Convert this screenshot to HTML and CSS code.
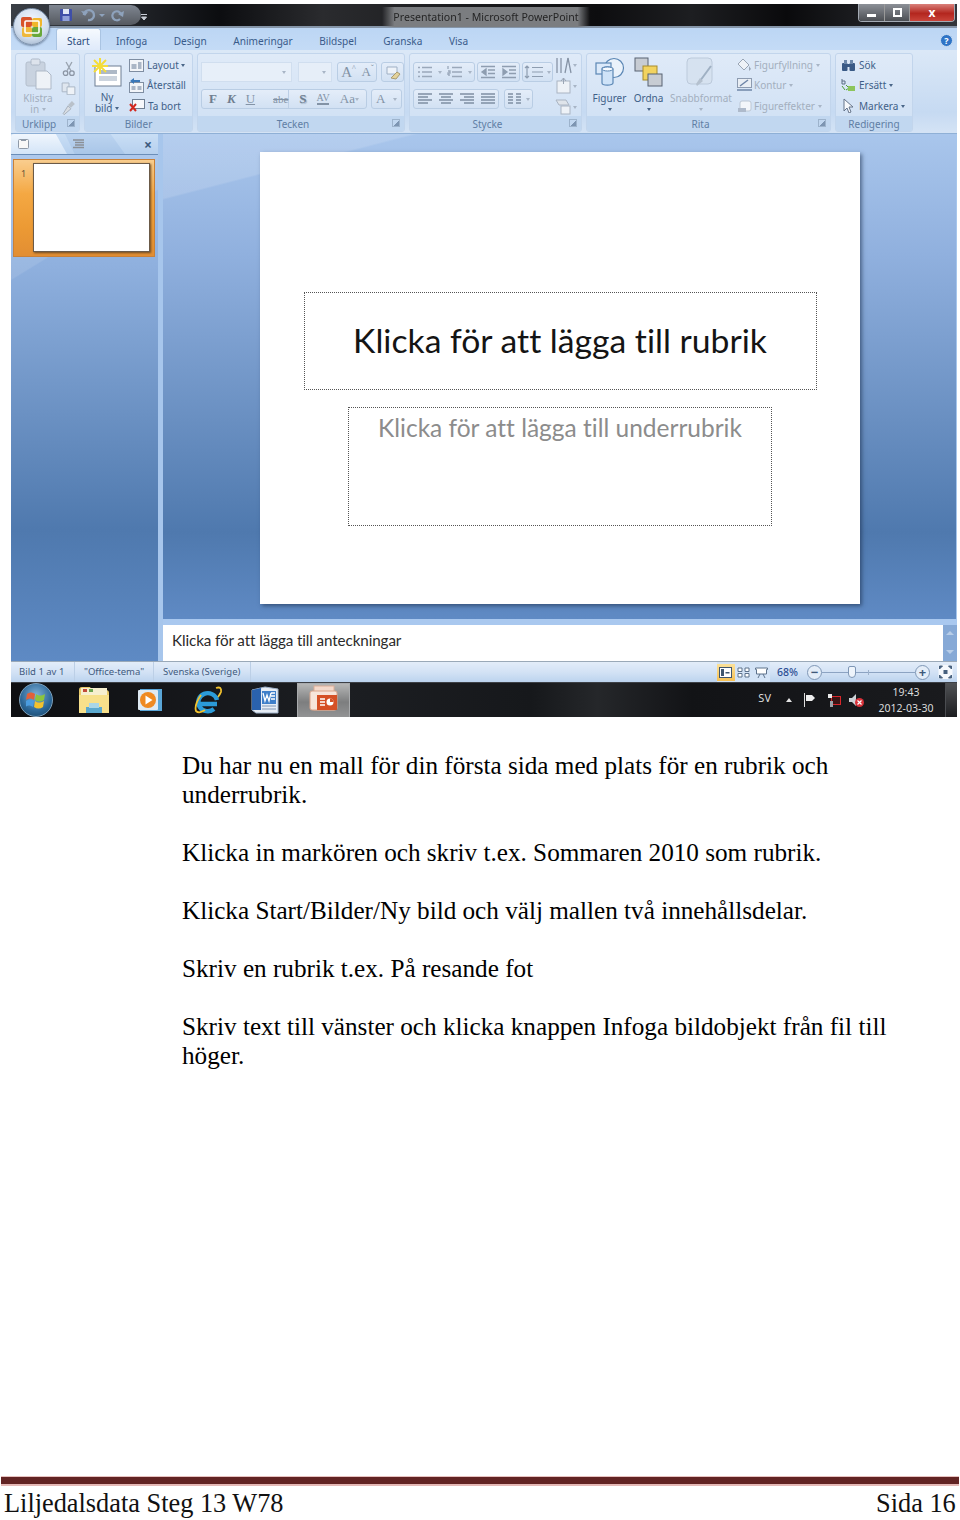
FILE: index.html
```html
<!DOCTYPE html>
<html lang="sv">
<head>
<meta charset="utf-8">
<title>Liljedalsdata Steg 13 W78</title>
<link rel="stylesheet" href="styles.css">
</head>
<body>
<div class="page">
  <div class="shot">
    <header class="titlebar">
      <div class="orb">
        <svg width="24" height="24" viewBox="0 0 24 24"><rect x="1" y="2" width="11" height="10" rx="2" fill="#d8532a"/><rect x="12" y="3" width="10" height="9" rx="2" fill="#f0b62c"/><rect x="2" y="12" width="10" height="10" rx="2" fill="#efb83a"/><rect x="12" y="12" width="10" height="10" rx="2" fill="#6aa83a"/><rect x="5" y="6" width="14" height="12" rx="1" fill="none" stroke="#fff" stroke-width="1.6"/></svg>
      </div>
      <div class="qat">
        <svg width="14" height="14" viewBox="0 0 14 14"><rect x="1" y="1" width="12" height="12" rx="1" fill="#3f4fa8"/><rect x="4" y="1" width="6" height="5" fill="#dfe6f5"/><rect x="3.500" y="8" width="7" height="5" fill="#8f9fd8"/></svg>
        <svg width="16" height="14" viewBox="0 0 16 14"><path d="M4 7 A5 5 0 1 1 8 12" fill="none" stroke="#8ea2bc" stroke-width="2.400"/><path d="M1 3 l4 5 l3-4z" fill="#8ea2bc"/></svg>
        <span class="qat-caret"></span>
        <svg width="14" height="14" viewBox="0 0 14 14"><path d="M10 6 A4.500 4.500 0 1 0 9 11" fill="none" stroke="#8ea2bc" stroke-width="2.200"/><path d="M13 3 l-1 6 l-5-3z" fill="#8ea2bc"/></svg>
      </div>
      <svg class="qat-more" width="8" height="8" viewBox="0 0 8 8"><path d="M1 1.500h6M1.500 4h5l-2.500 3z" fill="#c9ced6" stroke="#c9ced6"/></svg>
      <div class="doc-title">Presentation1 - Microsoft PowerPoint</div>
      <div class="winbtns">
        <div class="wb wb-min"><span class="wb-dash"></span></div>
        <div class="wb wb-max"><span class="wb-box"></span></div>
        <div class="wb wb-close">x</div>
      </div>
    </header>

    <nav class="tabs">
      <span class="tab active">Start</span>
      <span class="tab">Infoga</span>
      <span class="tab">Design</span>
      <span class="tab">Animeringar</span>
      <span class="tab">Bildspel</span>
      <span class="tab">Granska</span>
      <span class="tab">Visa</span>
      <span class="help">?</span>
    </nav>

    <section class="ribbon">
      <div class="group g-urklipp">
        <div class="gbody urklipp">
          <div class="bigbtn dis w-klistra">
            <svg width="28" height="32" viewBox="0 0 28 32"><rect x="2" y="4" width="19" height="24" rx="2" fill="#c9d3e0" stroke="#b4bfcd"/><rect x="7" y="1" width="9" height="6" rx="1.500" fill="#dde3ec" stroke="#aeb9c8"/><path d="M12 13h11l4 4v14H12z" fill="#eef2f7" stroke="#aeb9c8"/></svg>
            <span class="lbl l-first">Klistra</span><span class="lbl">in <i class="car"></i></span>
          </div>
          <div class="smallcol">
            <svg width="14" height="16" viewBox="0 0 14 16"><path d="M4 1l5 9M10 1L5 10" stroke="#9aa4b0" stroke-width="1.400"/><circle cx="3.500" cy="12.500" r="2.300" fill="none" stroke="#8b95a4" stroke-width="1.300"/><circle cx="10" cy="12.500" r="2.300" fill="none" stroke="#8b95a4" stroke-width="1.300"/></svg>
            <svg width="15" height="14" viewBox="0 0 15 14"><path d="M1 1h7v9H1z" fill="#dfe6ef" stroke="#aab6c5"/><path d="M6 5h8v8H6z" fill="#eef2f7" stroke="#aab6c5"/></svg>
            <svg width="14" height="16" viewBox="0 0 14 16"><path d="M10 1l3 3-4 4-3-3z" fill="#b9c1ca"/><path d="M6 6l3 3-7 6-1-1z" fill="#d8dde3" stroke="#a7b0bb"/></svg>
          </div>
        </div>
        <div class="gfoot"><span>Urklipp</span><i class="launch"></i></div>
      </div>

      <div class="group g-bilder">
        <div class="gbody bilder">
          <div class="bigbtn w-ny">
            <svg width="32" height="30" viewBox="0 0 32 30"><rect x="4" y="9" width="26" height="20" fill="#fff" stroke="#6f7f93"/><rect x="8" y="13" width="18" height="4" fill="#aeb9c7"/><rect x="8" y="19" width="18" height="5" fill="#ccd4de"/><path d="M9 1v16M1 9h16M3 3l12 12M15 3L3 15" stroke="#f4dd3a" stroke-width="2"/></svg>
            <span class="lbl dark l-ny">Ny</span><span class="lbl dark">bild <i class="car dk"></i></span>
          </div>
          <div class="rows">
            <div class="srow"><svg width="15" height="13" viewBox="0 0 15 13"><rect x=".5" y=".5" width="14" height="12" fill="#f2f5f9" stroke="#7f8ea2"/><rect x="2.500" y="5" width="5" height="5" fill="#aab6c6"/><rect x="9" y="3" width="3.500" height="7" fill="#aab6c6"/></svg><span>Layout <i class="car dk"></i></span></div>
            <div class="srow"><svg width="15" height="15" viewBox="0 0 15 15"><rect x=".5" y="4.500" width="14" height="10" fill="#f2f5f9" stroke="#7f8ea2"/><rect x="2.500" y="8" width="4" height="4" fill="#aab6c6"/><rect x="8.500" y="8" width="4" height="4" fill="#aab6c6"/><path d="M1 3l4-3v2h6v2H5v2z" fill="#3a78b8"/></svg><span>Återställ</span></div>
            <div class="srow"><svg width="16" height="13" viewBox="0 0 16 13"><rect x="3.500" y=".5" width="12" height="9" fill="#f6f8fb" stroke="#6f7f93"/><path d="M1 5l6 7M7 5l-6 7" stroke="#d3281f" stroke-width="2"/></svg><span>Ta bort</span></div>
          </div>
        </div>
        <div class="gfoot"><span>Bilder</span></div>
      </div>

      <div class="group g-tecken">
        <div class="gbody stack">
          <div class="crow c1">
            <div class="combo w-font"><i class="car"></i></div>
            <div class="combo w-size"><i class="car"></i></div>
            <div class="bset w-grow"><span class="ser big">A<sup>^</sup></span><span class="ser">A<sup>ˇ</sup></span></div>
            <div class="bset w-clear"><svg width="16" height="15" viewBox="0 0 16 15"><path d="M2 2h10v7H2z" fill="#eef3f9" stroke="#9fb0c5"/><path d="M6 13l6-6 3 2-4 5z" fill="#e3d29a" stroke="#a99b70"/></svg></div>
          </div>
          <div class="crow c2">
            <div class="bset w-fmt">
              <span class="ser b">F</span><span class="ser it">K</span><span class="ser un">U</span><span class="ser st">abe</span><span class="ser b sh">S</span><span class="ser av">AV<i class="arw"></i></span><span class="ser aa">Aa<i class="car"></i></span>
            </div>
            <div class="bset w-col"><span class="ser">A</span><i class="car"></i></div>
          </div>
        </div>
        <div class="gfoot has-launch"><span>Tecken</span><i class="launch"></i></div>
      </div>

      <div class="group g-stycke">
        <div class="gbody stycke">
          <div class="stack">
            <div class="crow c1 tight">
              <div class="bset w-list">
                <svg width="16" height="14" viewBox="0 0 16 14"><path d="M5 2.500h10M5 7h10M5 11.500h10M1 2.500h2M1 7h2M1 11.500h2" stroke="#9aa8ba" stroke-width="1.400"/></svg><i class="car"></i>
                <svg width="16" height="14" viewBox="0 0 16 14"><path d="M5 2.500h10M5 7h10M5 11.500h10M1 1v3M1 6h2v2H1v2M1 10h2" stroke="#9aa8ba" stroke-width="1.300" fill="none"/></svg><i class="car"></i>
              </div>
              <div class="bset w-indent">
                <svg width="16" height="14" viewBox="0 0 16 14"><path d="M1 1.500h14M8 5h7M8 8.500h7M1 12.500h14M6 4l-4 3 4 3z" stroke="#8e9db0" stroke-width="1.300" fill="#8e9db0"/></svg>
                <svg width="16" height="14" viewBox="0 0 16 14"><path d="M1 1.500h14M8 5h7M8 8.500h7M1 12.500h14M2 4l4 3-4 3z" stroke="#8e9db0" stroke-width="1.300" fill="#8e9db0"/></svg>
              </div>
              <div class="bset w-line">
                <svg width="20" height="14" viewBox="0 0 20 14"><path d="M3 1v12M1 3l2-2 2 2M1 11l2 2 2-2M8 2.500h11M8 7h11M8 11.500h11" stroke="#8e9db0" stroke-width="1.200" fill="none"/></svg><i class="car"></i>
              </div>
            </div>
            <div class="crow c2 tight">
              <div class="bset w-align">
                <svg width="16" height="14" viewBox="0 0 16 14"><path d="M1 2h14M1 5h10M1 8h14M1 11h10" stroke="#7f8ea2" stroke-width="1.600"/></svg>
                <svg width="16" height="14" viewBox="0 0 16 14"><path d="M1 2h14M3 5h10M1 8h14M3 11h10" stroke="#7f8ea2" stroke-width="1.600"/></svg>
                <svg width="16" height="14" viewBox="0 0 16 14"><path d="M1 2h14M5 5h10M1 8h14M5 11h10" stroke="#7f8ea2" stroke-width="1.600"/></svg>
                <svg width="16" height="14" viewBox="0 0 16 14"><path d="M1 2h14M1 5h14M1 8h14M1 11h14" stroke="#7f8ea2" stroke-width="1.600"/></svg>
              </div>
              <div class="bset w-cols">
                <svg width="15" height="14" viewBox="0 0 15 14"><path d="M1 2h5M1 5h5M1 8h5M1 11h5M9 2h5M9 5h5M9 8h5M9 11h5" stroke="#7f8ea2" stroke-width="1.600"/></svg><i class="car"></i>
              </div>
            </div>
          </div>
          <div class="smallcol stycke-col">
            <span class="ic-car"><svg width="17" height="17" viewBox="0 0 17 17"><path d="M2 1v15M6 1v15M13 1l-3 15M13 1l3 15" stroke="#8794a6" stroke-width="1.300" fill="none"/></svg><i class="car"></i></span>
            <span class="ic-car"><svg width="17" height="16" viewBox="0 0 17 16"><rect x="2" y="3" width="13" height="12" fill="#eef2f7" stroke="#aab4c2"/><path d="M8.500 0v6M6 3l2.500-3 2.500 3" stroke="#9aa5b4" fill="none"/></svg><i class="car"></i></span>
            <span class="ic-car"><svg width="17" height="16" viewBox="0 0 17 16"><path d="M1 1h10l3 5H4z" fill="#dfe4ea" stroke="#aab4c2"/><rect x="6" y="7" width="9" height="8" fill="#eef2f7" stroke="#aab4c2"/></svg><i class="car"></i></span>
          </div>
        </div>
        <div class="gfoot has-launch"><span>Stycke</span><i class="launch"></i></div>
      </div>

      <div class="group g-rita">
        <div class="gbody rita">
          <div class="bigbtn w-fig">
            <svg width="30" height="30" viewBox="0 0 30 30"><circle cx="19" cy="11" r="9.500" fill="#eaf2fb" stroke="#5a86b4" stroke-width="1.200"/><rect x="1" y="6" width="15" height="11" fill="#dceafa" stroke="#5a86b4" stroke-width="1.200"/><path d="M7 12a5 2 0 0 1 11 0v14a5 2 0 0 1-11 0z" fill="#cfe3f8" stroke="#5a86b4" stroke-width="1.200"/><ellipse cx="12.500" cy="12" rx="5.500" ry="2" fill="#f7fbff" stroke="#5a86b4"/></svg>
            <span class="lbl dark mt-fig">Figurer</span><i class="car dk solo"></i>
          </div>
          <div class="bigbtn w-ord">
            <svg width="30" height="30" viewBox="0 0 30 30"><rect x="1" y="1" width="13" height="13" fill="#c7ccd3" stroke="#596373"/><rect x="9" y="9" width="14" height="14" fill="#f2d35f" stroke="#a88b2d"/><rect x="14" y="17" width="14" height="12" fill="#c7ccd3" stroke="#596373"/></svg>
            <span class="lbl dark mt-fig">Ordna</span><i class="car dk solo"></i>
          </div>
          <div class="bigbtn dis w-snabb">
            <svg width="32" height="30" viewBox="0 0 32 30"><rect x="2" y="1" width="25" height="26" rx="4" fill="#d6e2f0" stroke="#bccadb"/><path d="M26 9L15 24" stroke="#9fb0c3" stroke-width="2"/><path d="M15 21l3 3-6 5-1-2z" fill="#b5c1cf"/></svg>
            <span class="lbl mt-fig">Snabbformat</span><i class="car solo"></i>
          </div>
          <div class="rows dis-rows">
            <div class="srow"><svg width="15" height="14" viewBox="0 0 15 14"><path d="M6 1l6 6-5 5-6-6z" fill="#eef2f7" stroke="#99a5b4"/><path d="M12 8l2 3-2 2z" fill="#99a5b4"/></svg><span>Figurfyllning <i class="car"></i></span></div>
            <div class="srow"><svg width="15" height="14" viewBox="0 0 15 14"><rect x=".5" y=".5" width="14" height="9" fill="#e9eef4" stroke="#8d9bb0"/><path d="M3 8l8-6M0 12h15" stroke="#6f86a8" stroke-width="1.500"/></svg><span>Kontur <i class="car"></i></span></div>
            <div class="srow"><svg width="15" height="14" viewBox="0 0 15 14"><rect x="3" y="2" width="11" height="10" rx="2" fill="#f3f6fa" stroke="#bcc7d4"/><rect x="1" y="9" width="8" height="4" fill="#aebacb"/></svg><span>Figureffekter <i class="car"></i></span></div>
          </div>
        </div>
        <div class="gfoot has-launch"><span>Rita</span><i class="launch"></i></div>
      </div>

      <div class="group g-red">
        <div class="gbody">
          <div class="rows red-rows">
            <div class="srow"><svg width="15" height="13" viewBox="0 0 15 13"><rect x="1" y="4" width="5.500" height="8" rx="1" fill="#3a5a86"/><rect x="8.500" y="4" width="5.500" height="8" rx="1" fill="#3a5a86"/><rect x="3" y="1" width="3" height="4" fill="#6c87aa"/><rect x="9" y="1" width="3" height="4" fill="#6c87aa"/><rect x="6" y="5" width="3" height="3" fill="#3a5a86"/></svg><span>Sök</span></div>
            <div class="srow"><svg width="15" height="14" viewBox="0 0 15 14"><path d="M1 1v5M1 3h3v3H1M9 9h5" stroke="#5a6c84" fill="none"/><path d="M1 8l3 4M5 7l3 3-3 2" stroke="#4f9b3a" fill="none"/><rect x="7" y="8" width="7" height="5" fill="#8cc55c"/></svg><span>Ersätt <i class="car dk"></i></span></div>
            <div class="srow"><svg width="15" height="15" viewBox="0 0 15 15"><path d="M3 1l9 8H8l2 5-2 1-2-5-3 3z" fill="#f7f9fc" stroke="#65748a"/></svg><span>Markera <i class="car dk"></i></span></div>
          </div>
        </div>
        <div class="gfoot"><span>Redigering</span></div>
      </div>
    </section>

    <main class="work">
      <aside class="pane">
        <div class="panetabs">
          <div class="ptab ptab-a"><svg width="11" height="10" viewBox="0 0 11 10"><rect x=".5" y=".5" width="10" height="9" rx="1" fill="#f8f8f8" stroke="#8f9aa8"/><rect x="3" y="0" width="5" height="2" fill="#8f9aa8"/></svg></div>
          <div class="ptab ptab-b"><svg width="11" height="10" viewBox="0 0 11 10"><path d="M0 1h11M2 3.500h9M2 6h9M0 8.500h11" stroke="#8a8f96" stroke-width="1.500"/></svg></div>
          <span class="pclose">×</span>
        </div>
        <div class="thumbrow">
          <span class="tnum">1</span>
          <div class="thumb"></div>
        </div>
      </aside>
      <div class="splitter"></div>
      <div class="editor">
        <div class="canvas">
          <div class="slide">
            <div class="ph ph-title">Klicka för att lägga till rubrik</div>
            <div class="ph ph-sub">Klicka för att lägga till underrubrik</div>
          </div>
        </div>
        <div class="notes">
          <div class="notes-body">Klicka för att lägga till anteckningar</div>
          <div class="notes-scroll"><i class="up"></i><i class="down"></i></div>
        </div>
      </div>
    </main>

    <footer class="status">
      <span class="st st1">Bild 1 av 1</span>
      <span class="st st2">"Office-tema"</span>
      <span class="st st3">Svenska (Sverige)</span>
      <div class="st-right">
        <div class="views">
          <span class="view on"><svg width="13" height="11" viewBox="0 0 13 11"><rect x=".5" y=".5" width="12" height="10" fill="#fff" stroke="#40566f"/><rect x="2" y="2" width="3" height="7" fill="#40566f"/><rect x="6.500" y="5" width="4" height="1.500" fill="#40566f"/></svg></span>
          <span class="view"><svg width="13" height="11" viewBox="0 0 13 11"><path d="M1 1h4v3.500H1zM8 1h4v3.500H8zM1 6.500h4V10H1zM8 6.500h4V10H8z" fill="#fff" stroke="#5d728c"/></svg></span>
          <span class="view"><svg width="13" height="12" viewBox="0 0 13 12"><path d="M.5 1h12v1.500h-1V7h-10V2.500h-1zM5 7l-2 4M8 7l2 4" fill="#fff" stroke="#5d728c"/></svg></span>
        </div>
        <span class="zoompct">68%</span>
        <span class="zbtn">−</span>
        <div class="slider"><i class="thumbz"></i><i class="tick"></i></div>
        <span class="zbtn">+</span>
        <svg class="fit" width="15" height="14" viewBox="0 0 14 14"><rect width="14" height="14" rx="2" fill="#f6f9fd"/><path d="M1 1l3 0-3 3zM13 1v3l-3-3zM1 13v-3l3 3zM13 13h-3l3-3z" fill="#47617f" stroke="#47617f"/><rect x="5" y="5" width="4" height="4" fill="#47617f"/></svg>
      </div>
    </footer>

    <div class="taskbar">
      <div class="startorb">
        <svg width="20" height="20" viewBox="0 0 20 20"><path d="M1 4c3-2 5-2 8 0l-1 6c-3-2-5-2-8 0z" fill="#e2603a"/><path d="M10 4c3 2 5 2 9 0l-1 6c-3 2-6 2-9 0z" fill="#8cc53e"/><path d="M0 11c3-2 5-2 8 0l-1 6c-3-2-5-2-8 0z" fill="#4a9ce0"/><path d="M9 11c3 2 5 2 9 0l-1 6c-3 2-6 2-9 0z" fill="#f3c22e"/></svg>
      </div>
      <span class="tb tb-folder"><svg width="32" height="30" viewBox="0 0 32 30"><path d="M1 5q0-3 3-3h8l2 3h14q3 0 3 3v20H1z" fill="#e8c96a"/><rect x="3" y="3" width="26" height="7" fill="#f6efcf"/><rect x="5" y="4" width="4" height="3" fill="#c24b3a"/><rect x="11" y="4" width="4" height="3" fill="#6aa54f"/><path d="M1 10h30v18H1z" fill="#f7e08b"/><path d="M8 22h16v6H8z" fill="#5ba9cf"/><path d="M11 18h10v5H11z" fill="#a9d6e8"/></svg></span>
      <span class="tb tb-media"><svg width="26" height="24" viewBox="0 0 26 24"><rect x="3" y="1" width="22" height="22" fill="#5aa6d8"/><rect x="1" y="2" width="20" height="20" rx="1" fill="#dfeaf3"/><circle cx="11" cy="12" r="8" fill="#ef8a22"/><path d="M8.500 7.500l7 4.500-7 4.500z" fill="#fff"/></svg></span>
      <span class="tb tb-ie"><svg width="30" height="30" viewBox="0 0 30 30"><path d="M23 3q6-2 5 4-2 5-6 7" fill="none" stroke="#f2c22e" stroke-width="1.800"/><path d="M7 19H24M24 15a9.500 9 0 1 0-3 9" fill="none" stroke="#2b9bd8" stroke-width="4.400"/><path d="M8 10Q1 20 3 26q3 3 9-1" fill="none" stroke="#f2c22e" stroke-width="1.800"/></svg></span>
      <span class="tb tb-word"><svg width="30" height="28" viewBox="0 0 30 28"><path d="M2 4l13-3 13 2v24H6l-4-3z" fill="#e7edf5" stroke="#9fb2c9"/><path d="M2 4l9-2v22l-9 0z" fill="#2a62ad"/><rect x="12" y="5" width="14" height="13" fill="#3f7fc9"/><path d="M13 7l2 8 2-6 2 6 2-8M21 7h4M21 10h4M21 13h4" stroke="#fff" stroke-width="1.300" fill="none"/><path d="M12 20h14M12 23h14" stroke="#7f96b5"/></svg></span>
      <span class="tb-active"><svg width="32" height="30" viewBox="0 0 32 30"><rect x="6" y="1" width="20" height="24" fill="#f4d9cb" stroke="#dcae97"/><rect x="2" y="6" width="27" height="19" rx="2" fill="#f7e4da" stroke="#d9a48b"/><rect x="9" y="10" width="20" height="15" fill="#d55026"/><path d="M12 14h5M12 17h5M12 20h5" stroke="#fff" stroke-width="1.500"/><circle cx="22" cy="17" r="3.500" fill="#fff"/><path d="M22 17v-3.500a3.500 3.500 0 0 1 3.500 3.500z" fill="#d55026"/></svg></span>
      <div class="tray">
        <span class="lang">SV</span>
        <i class="tray-up"></i>
        <svg class="t-flag" width="14" height="14" viewBox="0 0 14 14"><path d="M1.500 0v14" stroke="#ddd"/><path d="M3 2h6l3 3-3 3H3z" fill="#eee"/></svg>
        <svg class="t-net" width="15" height="15" viewBox="0 0 15 15"><rect x="4" y="3" width="10" height="9" fill="#d8262a"/><rect x="1" y="1" width="4" height="4" fill="#e8e8e8"/><rect x="5" y="4" width="8" height="7" fill="#3a1414"/><rect x="3" y="8" width="3" height="6" fill="#9aa3a8"/></svg>
        <svg class="t-vol" width="16" height="14" viewBox="0 0 16 14"><path d="M1 5h3l4-4v12L4 9H1z" fill="#cdd3d8"/><circle cx="11.500" cy="9.500" r="4.500" fill="#d8323a"/><path d="M9.500 7.500l4 4M13.500 7.500l-4 4" stroke="#fff" stroke-width="1.200"/></svg>
        <div class="clock"><span>19:43</span><span>2012-03-30</span></div>
        <span class="showdesk"></span>
      </div>
    </div>
  </div>

  <article class="doc">
    <p>Du har nu en mall för din första sida med plats för en rubrik och underrubrik.</p>
    <p>Klicka in markören och skriv t.ex. Sommaren 2010 som rubrik.</p>
    <p>Klicka Start/Bilder/Ny bild och välj mallen två innehållsdelar.</p>
    <p>Skriv en rubrik t.ex. På resande fot</p>
    <p>Skriv text till vänster och klicka knappen Infoga bildobjekt från fil till höger.</p>
  </article>

  <footer class="pagefoot">
    <div class="rule"></div>
    <div class="footrow"><span class="f-l">Liljedalsdata Steg 13 W78</span><span class="f-r">Sida 16</span></div>
  </footer>
</div>
</body>
</html>
```
FILE: styles.css
```css
* { box-sizing: border-box; }
html, body { margin: 0; padding: 0; background: #fff; }
.page { width: 960px; height: 1520px; display: flex; flex-direction: column; overflow: hidden; }
i { font-style: normal; display: inline-block; }

/* Screenshot */
.shot { width: 946px; height: 713px; margin: 4px 0 0 11px; flex: none; display: flex; flex-direction: column; font-family: "Noto Sans", sans-serif; filter: blur(.45px); overflow: hidden; }

.titlebar { position: relative; height: 24px; flex: none; background: linear-gradient(90deg, #3a3f46 0, #23262b 12%, #0c0d10 22%, #2a2b2e 33%, #0d0d0f 62%, #1d1e21 72%, #0a0a0c 82%, #33363b 100%); border-bottom: 2px solid #8595a8; }
.orb { position: absolute; left: 2px; top: 4px; width: 37px; height: 37px; border-radius: 50%; background: radial-gradient(circle at 50% 35%, #f4f8fd 0, #cfdcec 60%, #8fa6c2 100%); border: 1px solid #7f93ac; box-shadow: 0 1px 2px rgba(30,50,80,.5); display: flex; align-items: center; justify-content: center; z-index: 3; }
.qat { position: absolute; left: 38px; top: 1px; width: 92px; height: 20px; padding-left: 10px; border-radius: 0 12px 12px 0; background: linear-gradient(#7f8691, #55595f); display: flex; align-items: center; gap: 3px; }
.qat svg:nth-child(2) { margin-left: 4px; }
.qat-caret { width: 0; height: 0; border: 3px solid transparent; border-top-color: #8ea2bc; margin-top: 3px; }
.qat svg:nth-child(4) { margin-left: 3px; }
.qat-more { position: absolute; left: 129px; top: 9px; }
.doc-title { position: absolute; left: 371px; top: 3px; width: 208px; height: 20px; line-height: 20px; text-align: center; font-size: 10.600px; color: #242424; white-space: nowrap; background: linear-gradient(90deg, transparent, #7b7d80 6%, #7b7d80 94%, transparent); }
.winbtns { position: absolute; right: 2px; top: 0; height: 18px; display: flex; border: 1px solid #a4abb4; border-top: 0; border-radius: 0 0 4px 4px; overflow: hidden; }
.wb { height: 17px; display: flex; align-items: center; justify-content: center; background: linear-gradient(#8c9097, #4c4f54); border-right: 1px solid #999; }
.wb-min { width: 26px; }
.wb-max { width: 25px; }
.wb-close { width: 44px; height: 17px; line-height: 15px; background: linear-gradient(#d9807a, #b3261e 55%, #c9443a); color: #fff; font-weight: 700; font-size: 12px; border: 0; }
.wb-dash { width: 9px; height: 3px; background: #fff; margin-top: 5px; }
.wb-box { width: 9px; height: 9px; border: 2px solid #fff; }

.tabs { position: relative; height: 22px; flex: none; display: flex; align-items: flex-end; padding-left: 43px; background: linear-gradient(#bcd6f4, #c4dbf6); font-size: 10.100px; color: #3a5b8a; }
.tab { padding: 0 13.300px; height: 21px; line-height: 24px; white-space: nowrap; }
.tab.active { margin: 0 2px; padding: 0 10px; height: 22px; line-height: 25px; background: linear-gradient(#f6fafe, #dfeafb); border: 1px solid #aac4e2; border-bottom: 0; border-radius: 3px 3px 0 0; color: #2b4c7e; }
.help { margin-left: auto; margin-right: 4px; margin-bottom: 3px; width: 13px; height: 13px; border-radius: 50%; background: #2f74c6; border: 1px solid #c8dcf2; color: #fff; font-size: 9px; font-weight: 700; line-height: 11px; text-align: center; }

.ribbon { height: 84px; flex: none; display: flex; gap: 4px; padding: 3px 0 1px 4px; background: linear-gradient(#dbe8f7, #c6daf2 75%, #d4e3f5); border-bottom: 1px solid #8fb0d6; font-size: 10px; color: #5c7694; }
.group { display: flex; flex-direction: column; border: 1px solid #c2d5ec; border-radius: 3px; background: linear-gradient(#dfeaf8, #cfe0f4); overflow: hidden; }
.g-urklipp { width: 65px; }
.g-bilder { width: 109px; }
.g-tecken { width: 208px; }
.g-stycke { width: 173px; }
.g-rita { width: 245px; }
.g-red { width: 78px; }
.gbody { flex: 1; display: flex; min-height: 0; }
.gfoot { position: relative; height: 15px; flex: none; line-height: 17px; background: #c1d7f0; text-align: center; color: #5f7ea4; font-size: 10px; }
.has-launch { padding-right: 16px; }
.launch { position: absolute; right: 4px; top: 3px; width: 8px; height: 8px; border: 1px solid #9db3cc; background: linear-gradient(135deg, transparent 55%, #7d95b2 55%); }
.g-urklipp .gfoot { text-align: left; padding-left: 6px; }

.bigbtn { display: flex; flex-direction: column; align-items: center; font-size: 10px; line-height: 11px; }
.lbl { white-space: nowrap; }
.lbl.dark, .bigbtn .dark { color: #3f5f88; }
.dis .lbl { color: #a3afbe; }
.car { width: 0; height: 0; border: 2.500px solid transparent; border-top: 3px solid #a8b5c6; border-bottom: 0; vertical-align: 2px; }
.car.dk { border-top-color: #4a6688; }
.car.solo { margin-top: 4px; }
.smallcol { display: flex; flex-direction: column; align-items: center; }

.urklipp { padding: 4px 0 0 7px; }
.w-klistra { width: 30px; }
.l-first { margin-top: 3px; }
.urklipp .smallcol { margin-left: 8px; gap: 5px; padding-top: 3px; }
.bilder { padding: 3px 0 0 6px; }
.w-ny { width: 32px; }
.l-ny { margin-top: 5px; }
.rows { display: flex; flex-direction: column; gap: 0; }
.srow { display: flex; align-items: center; gap: 3px; height: 20.500px; white-space: nowrap; color: #3f5f88; }
.bilder .rows { margin: -2px 0 0 6px; }

.stack { display: flex; flex-direction: column; }
.crow { display: flex; gap: 5px; }
.g-tecken .stack { padding: 8px 0 0 3px; }
.c1 { height: 21px; gap: 4px; }
.c2 { height: 20px; margin-top: 6px; gap: 4px; }
.combo { height: 20px; background: #e6eef8; border: 1px solid #d0deef; display: flex; align-items: center; justify-content: flex-end; padding-right: 5px; }
.w-font { width: 93px; margin-right: 2px; background: #e7eff9; }
.w-size { width: 35px; margin-right: 1px; }
.bset { height: 20px; border: 1px solid #b9cde4; border-radius: 3px; display: flex; align-items: center; justify-content: space-around; background: linear-gradient(#e4edf9, #d2e1f3); }
.ser { font-family: "Liberation Serif", serif; font-size: 13px; color: #8393a6; white-space: nowrap; position: relative; }
.ser sup { font-size: 8px; line-height: 0; }
.ser.big { font-size: 15px; }
.ser.b { font-weight: 700; color: #6f7e90; }
.ser.it { font-style: italic; font-weight: 700; color: #6f7e90; }
.ser.un { text-decoration: underline; }
.ser.st { text-decoration: line-through; font-size: 11px; }
.ser.sh { text-shadow: 1px 1px 1px #9fb0c4; }
.ser.av { font-size: 10px; line-height: 9px; display: inline-flex; flex-direction: column; align-items: center; }
.arw { width: 12px; height: 2px; background: #8393a6; margin-top: 1px; }
.w-grow { width: 41px; }
.w-clear { width: 23px; }
.w-fmt { width: 166px; padding: 0 2px; }
.w-col { width: 31px; }

.stycke { padding: 8px 0 0 3px; }
.tight { gap: 2px; }
.w-list { width: 62px; }
.w-indent { width: 43px; }
.w-line { width: 31px; }
.w-align { width: 86px; margin-right: 3px; }
.w-cols { width: 29px; }
.stycke-col { margin-left: 2px; margin-top: -6px; gap: 3px; }
.ic-car { display: flex; align-items: center; gap: 1px; height: 19px; }

.rita { padding: 3px 0 0 4px; }
.w-fig { width: 37px; }
.w-ord { width: 31px; margin-left: 5px; }
.w-snabb { width: 64px; margin-left: 5px; }
.mt-fig { margin-top: 6px; }
.dis-rows { margin: -2px 0 0 4px; }
.dis-rows .srow { color: #a3afbe; gap: 2px; }
.red-rows { padding: 1px 0 0 5px; }

/* Work area */
.work { flex: 1; display: flex; min-height: 0; background: #8fb4e3; }
.pane { width: 147px; flex: none; background: linear-gradient(148.400deg, rgba(255,255,255,.1) 0, rgba(255,255,255,.1) 23.500%, transparent 23.800%), linear-gradient(#a9c6ec 0, #8fb0de 25%, #4f79ae 75%, #5e8ac4 100%); display: flex; flex-direction: column; }
.panetabs { height: 21px; display: flex; align-items: flex-end; background: linear-gradient(#c9def5, #b6d0ee); border-bottom: 1px solid #6b8eb8; }
.ptab { height: 20px; display: flex; align-items: center; }
.ptab-a { width: 56px; padding-left: 7px; background: linear-gradient(#f0f6fd, #d3e4f7); border-radius: 3px 0 0 0; clip-path: polygon(0 0, 80% 0, 100% 100%, 0 100%); }
.ptab-b { width: 60px; margin-left: -2px; padding-left: 8px; background: linear-gradient(#bcd4f0, #a9c6e8); clip-path: polygon(0 0, 76% 0, 100% 100%, 16% 100%); }
.pclose { margin-left: auto; margin-right: 6px; font: 700 14px/18px "Noto Sans", sans-serif; color: #3d5a7e; }
.thumbrow { margin: 4px 3px 0 2px; height: 98px; display: flex; padding: 3px 4px 4px 0; background: linear-gradient(#f9cd8e, #f4a843 35%, #ec9a34 70%, #e28e33); border: 1px solid #c98138; }
.tnum { width: 19px; text-align: center; font-size: 9px; color: #6a5536; line-height: 22px; }
.thumb { flex: 1; background: #fff; border: 1px solid #6b5a48; box-shadow: 1px 1px 2px #6a4a26; }
.splitter { width: 5px; flex: none; background: #a7c6ec; }

.editor { flex: 1; display: flex; flex-direction: column; min-width: 0; }
.canvas { flex: 1; min-height: 0; display: flex; align-items: center; justify-content: center; padding-top: 2px; border-right: 1px solid #a7c6ec;
  background: linear-gradient(165.500deg, rgba(255,255,255,.14) 0, rgba(255,255,255,.14) 9.300%, transparent 9.600%), linear-gradient(#a9c6ec 0, #90b0de 25%, #4f79ae 82%, #5f8ac4 100%); }
.slide { width: 600px; height: 452px; flex: none; background: #fff; box-shadow: 2px 2px 4px rgba(30,50,80,.6); display: flex; flex-direction: column; align-items: center; padding-top: 140px; padding-left: 1px; font-family: Lato, sans-serif; font-variant-ligatures: none; }
.ph { border: 1px dotted #555; text-align: center; white-space: nowrap; }
.ph-title { width: 513px; height: 98px; line-height: 94px; font-size: 33.700px; color: #141414; }
.ph-sub { width: 424px; height: 119px; margin-top: 17px; line-height: 40px; font-size: 24.500px; color: #8c8c8c; }

.notes { height: 42px; flex: none; display: flex; background: #fff; border-top: 6px solid #a9c8ef; }
.notes-body { flex: 1; padding: 0 0 0 9px; font: 15.200px/30px Lato, sans-serif; font-variant-ligatures: none; color: #2a2a2a; letter-spacing: -.1px; }
.notes-scroll { width: 14px; background: #86a9d6; display: flex; flex-direction: column; justify-content: space-between; align-items: center; padding: 6px 0 7px; }
.up, .down { width: 0; height: 0; border: 4px solid transparent; }
.up { border-bottom: 4px solid #b7cde8; border-top: 0; }
.down { border-top: 4px solid #b7cde8; border-bottom: 0; }

.status { height: 21px; flex: none; display: flex; align-items: center; background: linear-gradient(#e3edf9, #d3e2f5 50%, #bcd3ee); border-top: 1px solid #9aa9b8; font-size: 9.500px; color: #3f5a7e; }
.st { height: 100%; line-height: 19px; padding-left: 8px; border-right: 1px solid #bccfe6; white-space: nowrap; }
.st1 { width: 64px; }
.st2 { width: 79px; padding-left: 9px; }
.st3 { width: 97px; padding-left: 9px; }
.st-right { margin-left: auto; display: flex; align-items: center; height: 100%; }
.views { width: 53px; height: 100%; display: flex; background: #d3e3f6; padding: 2px 0 1px; }
.view { flex: 1; display: flex; align-items: center; justify-content: center; }
.view.on { background: linear-gradient(#fbe199, #f6c156); }
.zoompct { width: 21px; margin: 0 9px 0 7px; color: #2c4f94; font-size: 10.500px; font-weight: 500; white-space: nowrap; }
.zbtn { width: 15px; height: 15px; border-radius: 50%; border: 1px solid #7f97b6; background: #e4edf8; font: 700 13px/12px "Noto Sans", sans-serif; text-align: center; color: #40597a; flex: none; }
.slider { position: relative; width: 93px; height: 1px; background: #8ca3c2; }
.thumbz { position: absolute; left: 26px; top: -6px; width: 8px; height: 12px; background: #eef4fb; border: 1px solid #7f97b6; border-radius: 2px 2px 4px 4px; }
.tick { position: absolute; left: 46px; top: -2px; width: 1px; height: 5px; background: #9db1cb; }
.fit { margin: 0 4px 0 8px; flex: none; }

.taskbar { height: 35px; flex: none; display: flex; align-items: center; background: linear-gradient(90deg, #0e0f12, #1c1e22 35%, #16181b 55%, #25272a 62%, #121316 72%, #1a1b1e 100%); border-top: 1px solid #3d4046; color: #dcdcdc; }
.startorb { width: 34px; height: 34px; margin-left: 8px; border-radius: 50%; background: radial-gradient(circle at 50% 35%, #7fb1d8, #2a6596 60%, #16405f); border: 1px solid #7ea1bc; display: flex; align-items: center; justify-content: center; flex: none; }
.tb { display: flex; align-items: center; justify-content: center; flex: none; }
.tb-folder { width: 32px; margin-left: 25px; }
.tb-media { width: 26px; margin-left: 27px; }
.tb-ie { width: 30px; margin-left: 30px; }
.tb-word { width: 30px; margin-left: 27px; }
.tb-active { width: 53px; height: 35px; margin-left: 17px; display: flex; align-items: center; justify-content: center; background: linear-gradient(#b5b6b6, #7d7e7f 55%, #929394); border: 1px solid #a9abad; flex: none; }
.tray { margin-left: auto; height: 100%; display: flex; align-items: center; }
.lang { font-size: 11px; margin-right: 15px; margin-bottom: 6px; }
.tray-up { width: 0; height: 0; border: 3.500px solid transparent; border-bottom: 4px solid #e4e4e4; border-top: 0; margin-right: 11px; }
.tray svg { flex: none; }
.t-flag { margin-right: 10px; }
.t-net { margin-right: 6px; }
.t-vol { margin-right: 9px; }
.clock { width: 66px; margin: 0 6px 0 0; text-align: center; display: flex; flex-direction: column; font-size: 10.500px; line-height: 16px; }
.showdesk { width: 12px; height: 100%; background: linear-gradient(#505255, #1c1d20); border-left: 1px solid #4a4c50; }

/* Document text */
.doc { margin: 34px 0 0 182px; width: 720px; font: 25.200px/29px "Liberation Serif", serif; color: #000; }
.doc p { margin: 0 0 29px; }

.pagefoot { margin-top: auto; padding: 0 1px; }
.rule { height: 10px; border-top: 1px solid #e8c2c0; border-bottom: 2px solid #e5b9b6; background: #622423; }
.footrow { display: flex; justify-content: space-between; padding: 0 3px; height: 34px; font: 28px/34px "Liberation Serif", serif; color: #111; }
.f-l { transform: scaleX(.94); transform-origin: left center; }
.f-r { transform: scaleX(.94); transform-origin: right center; }
```
